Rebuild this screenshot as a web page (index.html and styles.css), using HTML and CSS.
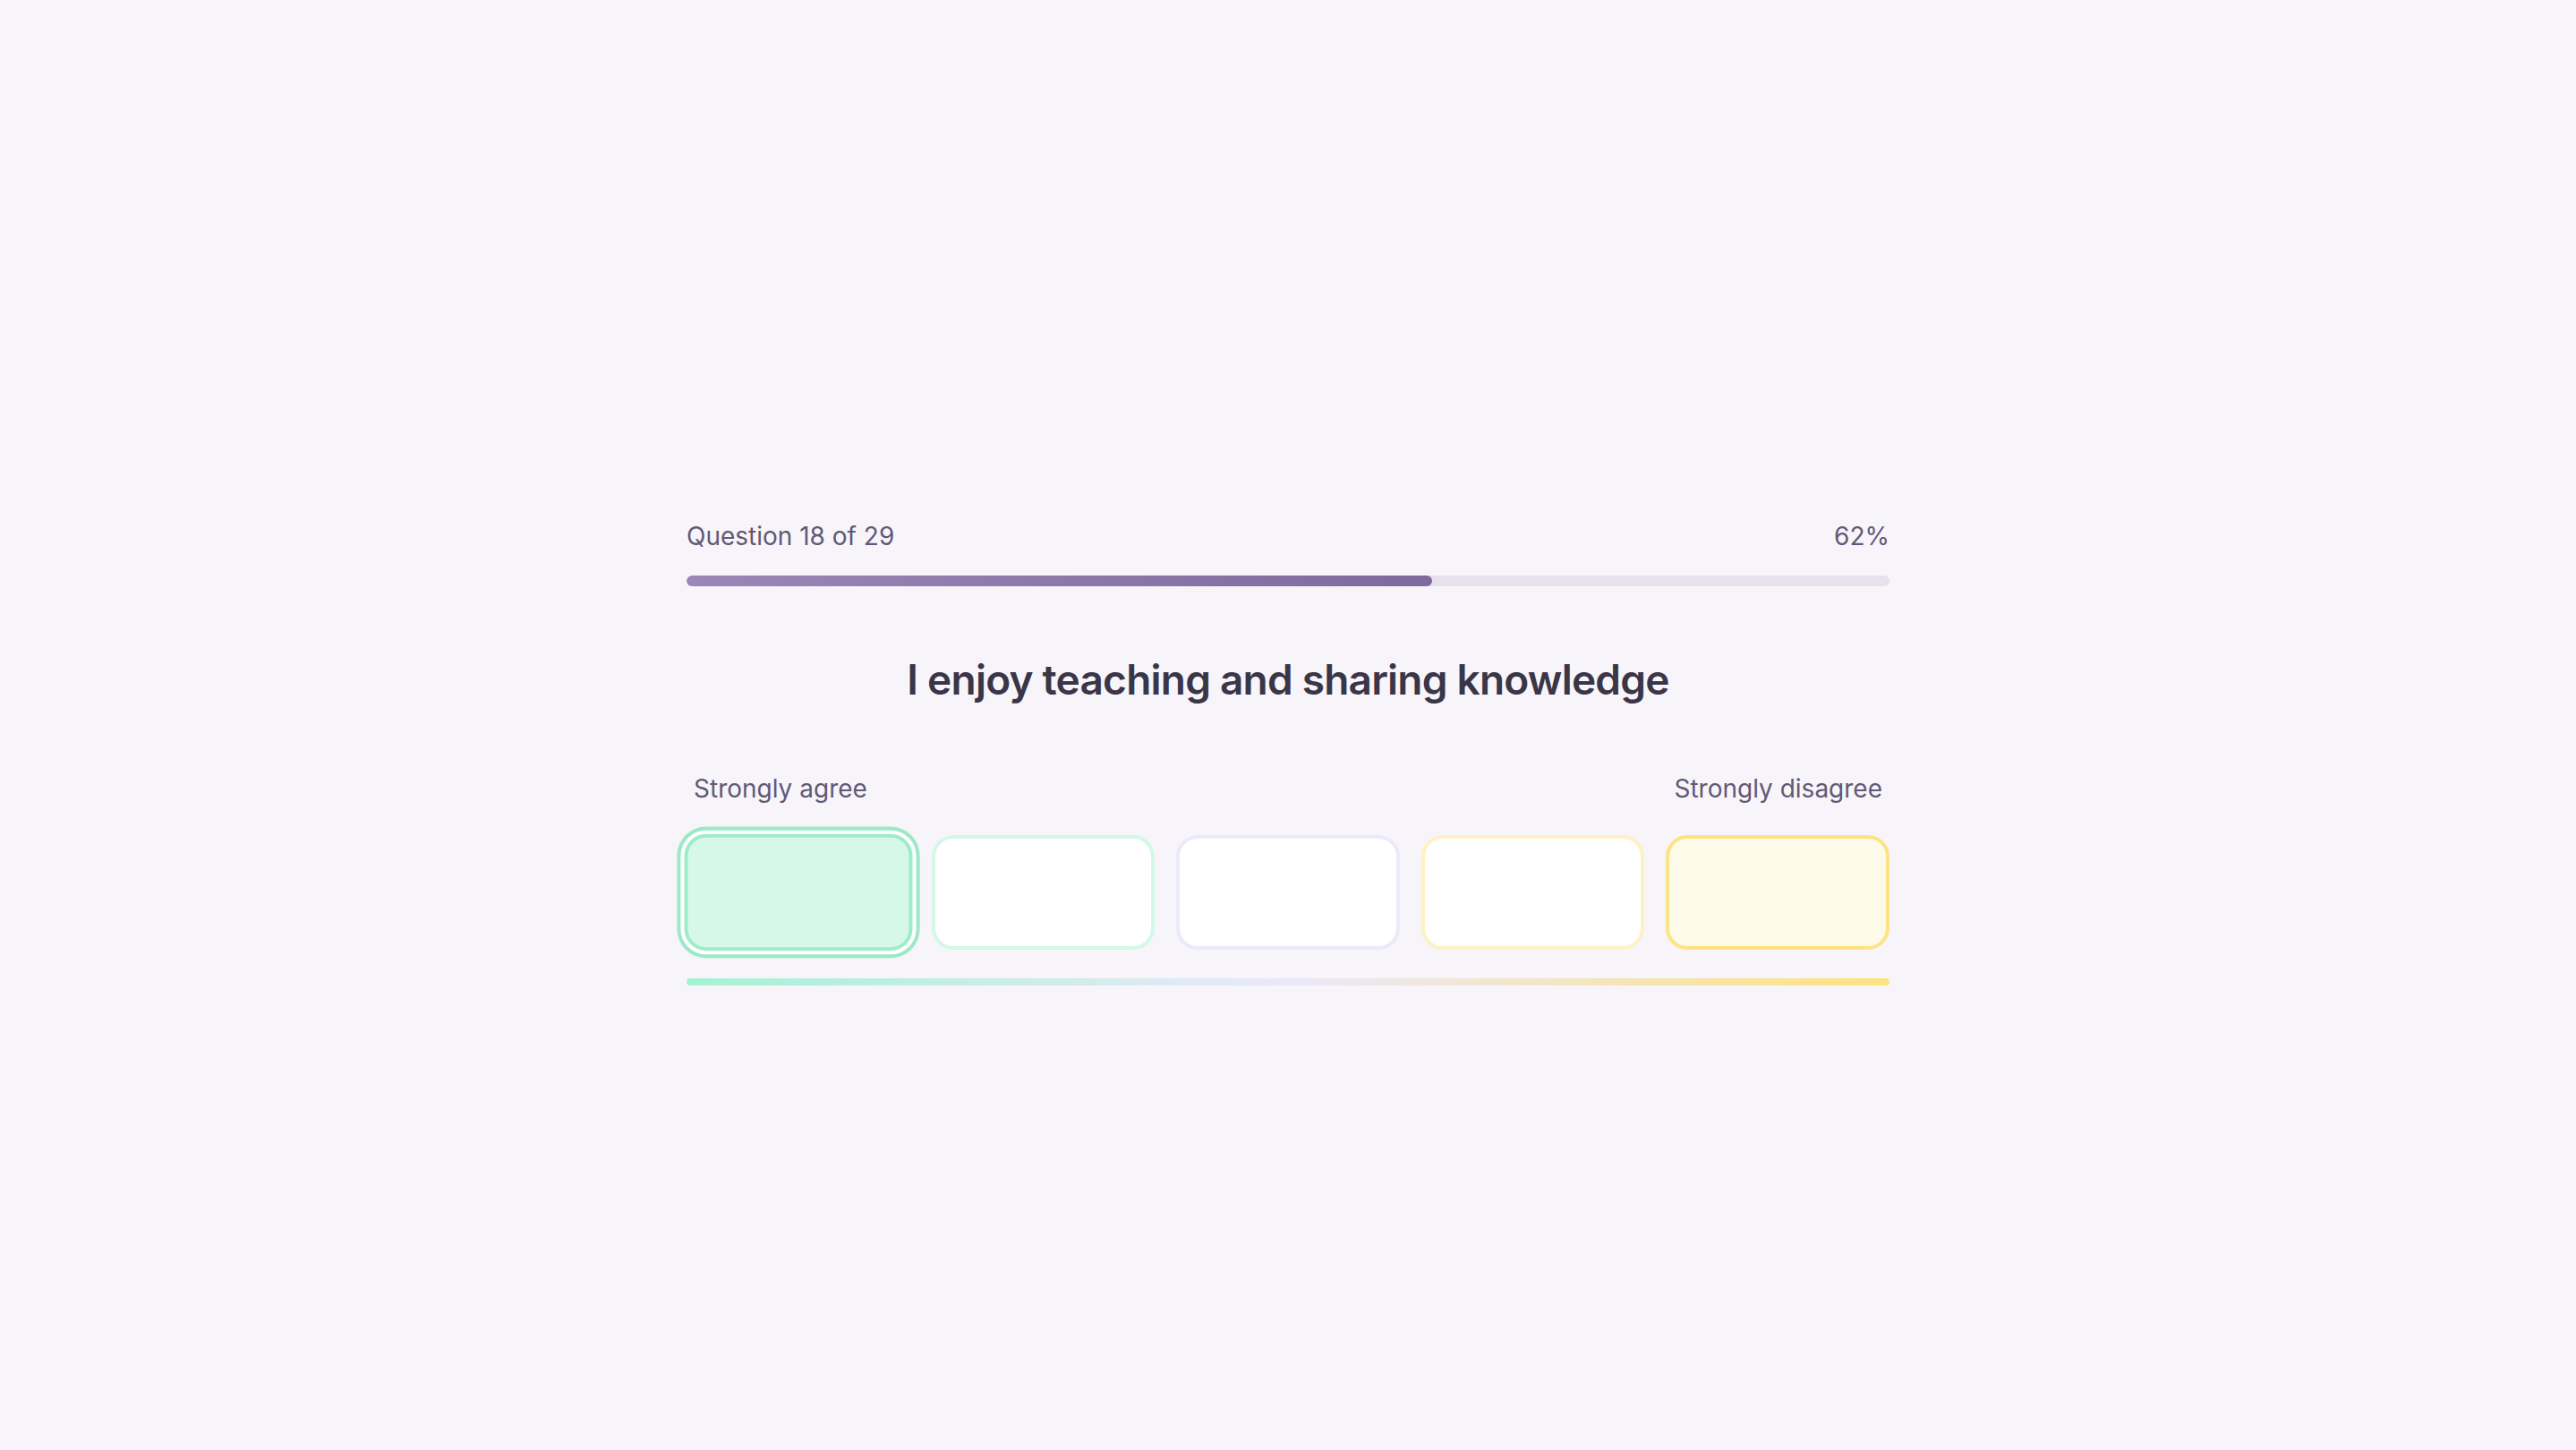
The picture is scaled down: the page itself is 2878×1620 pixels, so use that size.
FILE: index.html
```html
<!DOCTYPE html>
<html lang="en">
<head>
<meta charset="utf-8">
<title>Question 18 of 29</title>
<link rel="stylesheet" href="styles.css">
</head>
<body>
<main class="quiz">
  <div class="progress-head">
    <span class="progress-label">Question 18 of 29</span>
    <span class="progress-label">62%</span>
  </div>
  <div class="progress-track"><div class="progress-fill" style="width: 62%"></div></div>
  <h1 class="question">I enjoy teaching and sharing knowledge</h1>
  <div class="scale-labels">
    <span>Strongly agree</span>
    <span>Strongly disagree</span>
  </div>
  <div class="options">
    <button class="option opt-1 selected" aria-label="Strongly agree"></button>
    <button class="option opt-2" aria-label="Agree"></button>
    <button class="option opt-3" aria-label="Neutral"></button>
    <button class="option opt-4" aria-label="Disagree"></button>
    <button class="option opt-5" aria-label="Strongly disagree"></button>
  </div>
  <div class="scale-line"></div>
</main>
</body>
</html>
```

FILE: styles.css
```css
html, body {
  margin: 0;
  padding: 0;
  background: #f7f5f9;
}
body {
  font-family: Inter, "Noto Sans", "Liberation Sans", sans-serif;
  min-height: 1620px;
}
.quiz {
  width: 1344px;
  margin: 0 auto;
  padding-top: 582px;
  display: flex;
  flex-direction: column;
}
.progress-head {
  display: flex;
  justify-content: space-between;
  align-items: center;
}
.progress-label {
  font-size: 28px;
  line-height: 34px;
  color: #625877;
  font-weight: 400;
}
.progress-track {
  margin-top: 27px;
  height: 12px;
  border-radius: 6px;
  background: #e6e1ec;
  overflow: hidden;
}
.progress-fill {
  height: 100%;
  border-radius: 6px;
  background: linear-gradient(90deg, #9b86b8, #7e6a9c);
}
.question {
  margin: 76px 0 0;
  text-align: center;
  font-size: 46px;
  line-height: 56px;
  font-weight: 600;
  color: #3b3548;
  letter-spacing: -0.017em;
}
.scale-labels {
  margin-top: 77px;
  padding: 0 8px;
  display: flex;
  justify-content: space-between;
  font-size: 28px;
  line-height: 34px;
  color: #625877;
}
.options {
  margin-top: 35px;
  display: flex;
  gap: 24px;
}
.option {
  flex: 1;
  height: 128px;
  box-sizing: border-box;
  border-radius: 24px;
  border: 4px solid #e5e1ec;
  background: #ffffff;
  padding: 0;
  cursor: pointer;
}
.opt-1 { background: #d6f8e8; border-color: #9eecca; }
.opt-2 { border-color: #d3f8e6; }
.opt-3 { border-color: #ece9fb; }
.opt-4 { border-color: #fef1c3; }
.opt-5 { background: #fefae9; border-color: #fde384; }
.option.selected {
  transform: scale(1.02);
  box-shadow: 0 0 0 4px #ffffff, 0 0 0 8px #9de9c7;
}
.scale-line {
  margin-top: 32px;
  height: 8px;
  border-radius: 4px;
  background: linear-gradient(90deg, #a5f2d3 0%, #ebe8fb 50%, #fde27f 100%);
}
```
